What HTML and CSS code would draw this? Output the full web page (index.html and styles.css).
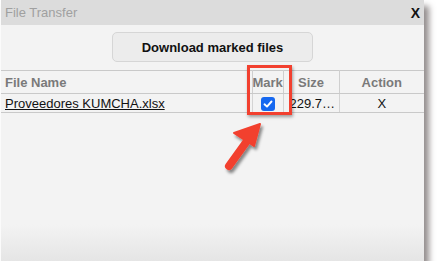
FILE: index.html
```html
<!DOCTYPE html>
<html>
<head>
<meta charset="utf-8">
<link rel="stylesheet" href="styles.css">
</head>
<body>
<div class="window">
  <div class="titlebar">
    <span class="title">File Transfer</span>
    <span class="close">X</span>
  </div>
  <div class="toolbar">
    <button class="download">Download marked files</button>
  </div>
  <table class="files">
    <colgroup>
      <col class="c-name"><col class="c-mark"><col class="c-size"><col class="c-action">
    </colgroup>
    <thead>
      <tr><th class="name">File Name</th><th>Mark</th><th>Size</th><th>Action</th></tr>
    </thead>
    <tbody>
      <tr>
        <td class="name"><a href="#">Proveedores KUMCHA.xlsx</a></td>
        <td class="mark"><span class="check"><svg width="14" height="14" viewBox="0 0 14 14"><path d="M3.5 7.3 L6 9.6 L10.5 4.5" fill="none" stroke="#fff" stroke-width="1.9" stroke-linecap="round" stroke-linejoin="round"/></svg></span></td>
        <td class="size">229.7 KB</td>
        <td class="action">X</td>
      </tr>
    </tbody>
  </table>
  <div class="highlight"></div>
  <svg class="arrow" width="60" height="70" viewBox="0 0 60 70">
    <defs>
      <filter id="sh" x="-30%" y="-30%" width="160%" height="160%">
        <feDropShadow dx="2" dy="3" stdDeviation="1.5" flood-color="#000" flood-opacity="0.45"/>
      </filter>
    </defs>
    <g filter="url(#sh)">
      <path d="M10 54 L28 29" stroke="#f2402f" stroke-width="8" stroke-linecap="round"/>
      <path d="M41 12 L15 21 L35 34 Z" fill="#f2402f" stroke="#f2402f" stroke-width="2" stroke-linejoin="round"/>
    </g>
  </svg>
</div>
</body>
</html>
```

FILE: styles.css
```css
html, body {
  margin: 0;
  padding: 0;
  background: #ffffff;
}
body {
  font-family: "Liberation Sans", Arial, Helvetica, sans-serif;
  font-size: 13px;
}
.window {
  position: relative;
  width: 423px;
  height: 261px;
  margin-left: 1px;
  background: linear-gradient(to bottom, #f3f3f3 0%, #f3f3f3 86%, #e5e5e5 100%);
  box-shadow: 5px 6px 6px rgba(60, 50, 50, 0.55);
}
.titlebar {
  height: 25px;
  background: #dcdcdc;
  display: flex;
  align-items: center;
  justify-content: space-between;
  padding: 0 4px 0 4px;
}
.title {
  color: #a0a0a0;
  font-size: 13px;
}
.close {
  font-weight: bold;
  font-size: 14px;
  color: #111;
}
.toolbar {
  height: 45px;
  display: flex;
  justify-content: center;
  align-items: flex-start;
  padding-top: 7px;
  box-sizing: border-box;
}
.download {
  width: 201px;
  height: 30px;
  background: #ececec;
  border: 1px solid #d6d6d6;
  border-radius: 5px;
  font-family: "Liberation Sans", Arial, sans-serif;
  font-weight: bold;
  font-size: 13px;
  color: #111;
  padding: 0;
}
.files {
  width: 423px;
  border-collapse: collapse;
  table-layout: fixed;
  border-top: 1px solid #c9c9c9;
}
.c-name { width: 251px; }
.c-mark { width: 31px; }
.c-size { width: 56px; }
.c-action { width: 85px; }
.files th {
  height: 22px;
  padding: 0;
  font-weight: bold;
  color: #7a7a7a;
  font-size: 13px;
  text-align: center;
  border-left: 1px solid #cfcfcf;
  border-bottom: 1px solid #c9c9c9;
  white-space: nowrap;
  overflow: hidden;
}
.files td {
  height: 18px;
  padding: 0;
  border-left: 1px solid #d4d4d4;
  border-bottom: 1px solid #c9c9c9;
  color: #111;
  white-space: nowrap;
  overflow: hidden;
}
.files th.name, .files td.name {
  text-align: left;
  padding-left: 4px;
  border-left: none;
}
.files td.name a {
  color: #111;
  text-decoration: underline;
}
.files td.mark {
  text-align: center;
}
.check {
  display: inline-block;
  width: 14px;
  height: 14px;
  border-radius: 3px;
  background: #1668f0;
  vertical-align: middle;
  line-height: 0;
}
.files td.size {
  padding-left: 6px;
  text-overflow: ellipsis;
}
.files td.action {
  text-align: center;
}
.highlight {
  position: absolute;
  left: 246px;
  top: 65px;
  width: 39px;
  height: 44px;
  border: 3px solid #f2402f;
  box-shadow: 1px 2px 3px rgba(0, 0, 0, 0.35);
}
.arrow {
  position: absolute;
  left: 218px;
  top: 112px;
}
```
